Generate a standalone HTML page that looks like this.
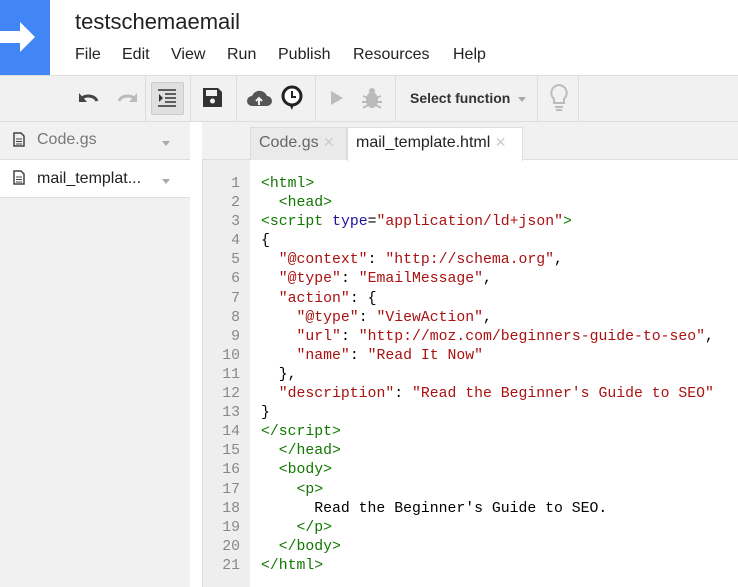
<!DOCTYPE html>
<html><head><style>
*{margin:0;padding:0;box-sizing:border-box}
body{width:738px;height:587px;overflow:hidden;background:#fff;font-family:"Liberation Sans",sans-serif;position:relative}
.a{position:absolute}
.logo{left:0;top:0;width:50px;height:75px;background:#4285f4}
.title{left:75px;top:9px;font-size:22px;color:#222}
.menu{top:46px;font-size:16px;color:#222}
.tb{left:0;top:75px;width:738px;height:47px;background:#f1f1f1;border-top:1px solid #ddd;border-bottom:1px solid #ddd}
.sep{top:75px;width:1px;height:47px;background:#dcdcdc}
.side{left:0;top:122px;width:190px;height:465px;background:#f1f1f1}
.row{left:0;width:190px;height:38px;font-size:16px}
.gut{left:202px;top:122px;width:48px;height:465px;background:#eeeeee;border-left:1px solid #ddd}
.tabs{left:202px;top:122px;width:536px;height:38px;background:#f1f1f1;border-bottom:1px solid #ddd}
.code{left:261px;top:175px;font-family:"Liberation Mono",monospace;font-size:14.8px;line-height:19.1px;white-space:pre;color:#000}
.nums{left:202px;top:175px;width:38px;text-align:right;font-family:"Liberation Mono",monospace;font-size:14.8px;line-height:19.1px;color:#888;white-space:pre}
.g{color:#170}.r{color:#a11}.b{color:#219}
.dd{width:0;height:0;border-left:4px solid transparent;border-right:4px solid transparent;border-top:5px solid #aaa}
</style></head><body>
<div class="a logo"><svg width="50" height="75"><path d="M0 31h20v-9l15 15-15 15v-9H0z" fill="#fff"/></svg></div>
<div class="a title">testschemaemail</div>
<div class="a menu" style="left:75px">File</div>
<div class="a menu" style="left:122px">Edit</div>
<div class="a menu" style="left:171px">View</div>
<div class="a menu" style="left:227px">Run</div>
<div class="a menu" style="left:278px">Publish</div>
<div class="a menu" style="left:353px">Resources</div>
<div class="a menu" style="left:453px">Help</div>

<div class="a tb"></div>
<div class="a sep" style="left:145px"></div>
<div class="a sep" style="left:190px"></div>
<div class="a sep" style="left:236px"></div>
<div class="a sep" style="left:315px"></div>
<div class="a sep" style="left:395px"></div>
<div class="a sep" style="left:537px"></div>
<div class="a sep" style="left:578px"></div>
<svg class="a" style="left:76px;top:86px" width="30" height="24"><path d="M5 13a9 7 0 0 1 16 2" stroke="#444" stroke-width="3" fill="none"/><path d="M3 7v9h8z" fill="#444"/></svg>
<svg class="a" style="left:110px;top:86px" width="30" height="24"><path d="M25 13a9 7 0 0 0-16 2" stroke="#bbb" stroke-width="3" fill="none"/><path d="M27 7v9h-8z" fill="#bbb"/></svg>
<div class="a" style="left:151px;top:82px;width:33px;height:33px;background:#e0e0e0;border:1px solid #ccc;border-radius:2px"></div>
<svg class="a" style="left:158px;top:89px" width="20" height="18"><path d="M0 1h18M7 5h11M7 9h11M7 13h11M0 17h18" stroke="#333" stroke-width="1.6"/><path d="M1 5l4 4-4 4z" fill="#333"/></svg>
<svg class="a" style="left:203px;top:88px" width="19" height="19"><path d="M0 0h15l4 4v15H0z" fill="#333"/><rect x="3" y="2" width="11" height="6" fill="#f1f1f1"/><circle cx="9.5" cy="13" r="2.5" fill="#f1f1f1"/></svg>
<svg class="a" style="left:246px;top:88px" width="27" height="20"><path d="M6 18a5 5 0 0 1 0-10 8 8 0 0 1 15 0 5 5 0 0 1 0 10z" fill="#555"/><path d="M13 17v-6M10 13l3-3 3 3" stroke="#f1f1f1" stroke-width="2" fill="none"/></svg>
<svg class="a" style="left:280px;top:85px" width="24" height="27"><circle cx="12" cy="11" r="9" stroke="#222" stroke-width="3" fill="#fff"/><path d="M12 6v6h4" stroke="#222" stroke-width="2" fill="none"/><path d="M9 19l3 6 2-6z" fill="#222"/></svg>
<svg class="a" style="left:330px;top:90px" width="14" height="16"><path d="M1 1l12 7-12 7z" fill="#bbb"/></svg>
<svg class="a" style="left:361px;top:86px" width="22" height="24"><ellipse cx="11" cy="14" rx="6" ry="8" fill="#bbb"/><circle cx="11" cy="5" r="3" fill="#bbb"/><path d="M2 10l5 2M20 10l-5 2M1 16h5M21 16h-5M2 22l5-3M20 22l-5-3" stroke="#bbb" stroke-width="2"/></svg>
<div class="a" style="left:410px;top:90px;font-size:14px;font-weight:bold;color:#333">Select function</div>
<div class="a dd" style="left:518px;top:97px"></div>
<svg class="a" style="left:548px;top:83px" width="22" height="30"><path d="M11 2a8 8 0 0 0-5 14v4h10v-4a8 8 0 0 0-5-14z" stroke="#bbb" stroke-width="2" fill="none"/><path d="M7 24h8M8 27h6" stroke="#bbb" stroke-width="2"/></svg>

<div class="a side"></div>
<div class="a row" style="top:122px;border-bottom:1px solid #ddd"></div>
<div class="a row" style="top:160px;background:#fff;border-bottom:1px solid #ddd"></div>
<svg class="a" style="left:13px;top:132px" width="12" height="15"><path d="M1 1h7l3 3v10H1z" stroke="#444" stroke-width="1.5" fill="none"/><path d="M3 7h6M3 9.5h6M3 12h6" stroke="#444"/></svg>
<div class="a" style="left:37px;top:131px;font-size:16px;color:#777">Code.gs</div>
<div class="a dd" style="left:162px;top:141px"></div>
<svg class="a" style="left:13px;top:170px" width="12" height="15"><path d="M1 1h7l3 3v10H1z" stroke="#444" stroke-width="1.5" fill="none"/><path d="M3 7h6M3 9.5h6M3 12h6" stroke="#444"/></svg>
<div class="a" style="left:37px;top:170px;font-size:16px;color:#222">mail_templat...</div>
<div class="a dd" style="left:162px;top:179px"></div>

<div class="a gut"></div>
<div class="a tabs"></div>
<div class="a" style="left:250px;top:127px;width:97px;height:33px;background:#eaeaea;border:1px solid #ddd;border-bottom:none"></div>
<div class="a" style="left:259px;top:134px;font-size:16px;color:#666">Code.gs <span style="color:#ccc;font-size:14px">✕</span></div>
<div class="a" style="left:347px;top:127px;width:176px;height:34px;background:#fff;border:1px solid #ddd;border-bottom:none"></div>
<div class="a" style="left:356px;top:134px;font-size:16px;color:#222">mail_template.html <span style="color:#ccc;font-size:14px">✕</span></div>

<div class="a nums">1
2
3
4
5
6
7
8
9
10
11
12
13
14
15
16
17
18
19
20
21</div>
<div class="a code"><span class="g">&lt;html&gt;</span>
  <span class="g">&lt;head&gt;</span>
<span class="g">&lt;script</span> <span class="b">type</span>=<span class="r">"application/ld+json"</span><span class="g">&gt;</span>
{
  <span class="r">"@context"</span>: <span class="r">"http://schema.org"</span>,
  <span class="r">"@type"</span>: <span class="r">"EmailMessage"</span>,
  <span class="r">"action"</span>: {
    <span class="r">"@type"</span>: <span class="r">"ViewAction"</span>,
    <span class="r">"url"</span>: <span class="r">"http://moz.com/beginners-guide-to-seo"</span>,
    <span class="r">"name"</span>: <span class="r">"Read It Now"</span>
  },
  <span class="r">"description"</span>: <span class="r">"Read the Beginner's Guide to SEO"</span>
}
<span class="g">&lt;/script&gt;</span>
  <span class="g">&lt;/head&gt;</span>
  <span class="g">&lt;body&gt;</span>
    <span class="g">&lt;p&gt;</span>
      Read the Beginner's Guide to SEO.
    <span class="g">&lt;/p&gt;</span>
  <span class="g">&lt;/body&gt;</span>
<span class="g">&lt;/html&gt;</span></div>
</body></html>
